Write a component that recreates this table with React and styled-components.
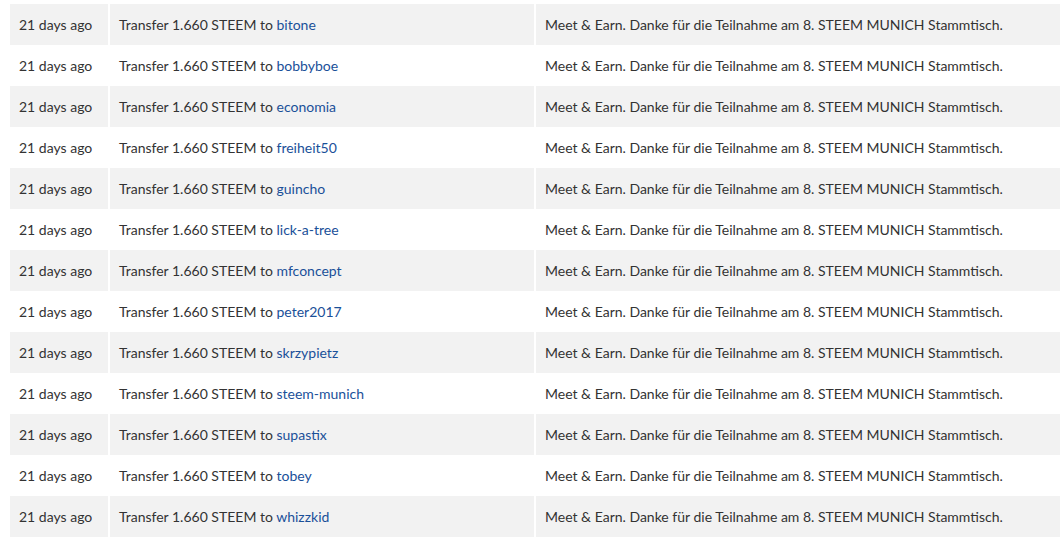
import styled, { createGlobalStyle } from "styled-components";

const GlobalStyle = createGlobalStyle`
  body {
    margin: 0;
    background: #fff;
    font-family: Lato, "Open Sans", sans-serif;
    color: #333;
  }
`;

const Wrapper = styled.div`
  padding: 4px 2px 0 10px;
`;

const Table = styled.table`
  width: 1050px;
  border-collapse: separate;
  border-spacing: 0;
  font-size: 14px;
`;

const Row = styled.tr`
  background: ${(props) => (props.$striped ? "#f2f2f2" : "#fff")};
`;

const Cell = styled.td`
  height: 41px;
  padding: 0 9px 1px;
  box-sizing: border-box;
  white-space: nowrap;
  vertical-align: middle;
  border-left: 2px solid #fff;
  width: ${(props) => props.$width || "auto"};

  &:first-child {
    border-left: none;
  }
`;

const Account = styled.a`
  color: #1a5099;
  text-decoration: none;
`;

const recipients = [
  "bitone",
  "bobbyboe",
  "economia",
  "freiheit50",
  "guincho",
  "lick-a-tree",
  "mfconcept",
  "peter2017",
  "skrzypietz",
  "steem-munich",
  "supastix",
  "tobey",
  "whizzkid",
];

const memo =
  "Meet & Earn. Danke für die Teilnahme am 8. STEEM MUNICH Stammtisch.";

const App = () => (
  <>
    <GlobalStyle />
    <Wrapper>
      <Table>
        <tbody>
          {recipients.map((name, i) => (
            <Row key={name} $striped={i % 2 === 0}>
              <Cell $width="98px">21 days ago</Cell>
              <Cell $width="426px">
                Transfer 1.660 STEEM to <Account href="#">{name}</Account>
              </Cell>
              <Cell>{memo}</Cell>
            </Row>
          ))}
        </tbody>
      </Table>
    </Wrapper>
  </>
);

export default App;
